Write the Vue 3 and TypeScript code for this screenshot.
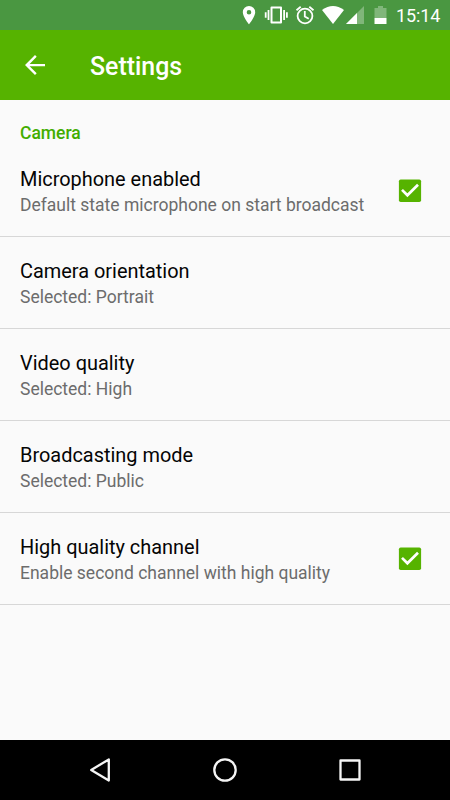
<script setup lang="ts">
interface Setting { title: string; summary: string; checked?: boolean }
const settings: Setting[] = [
  { title: 'Microphone enabled', summary: 'Default state microphone on start broadcast', checked: true },
  { title: 'Camera orientation', summary: 'Selected: Portrait' },
  { title: 'Video quality', summary: 'Selected: High' },
  { title: 'Broadcasting mode', summary: 'Selected: Public' },
  { title: 'High quality channel', summary: 'Enable second channel with high quality', checked: true },
]
</script>

<template>
  <div class="screen">
    <div class="status">
      <svg width="148" height="30" viewBox="240 0 148 30">
        <path fill="#fff" fill-rule="evenodd" d="M249 6a6.200 6.200 0 0 0-6.200 6.200c0 4.600 6.200 12 6.200 12s6.200-7.400 6.200-12A6.200 6.200 0 0 0 249 6zm0 4a2.300 2.300 0 1 1 0 4.600a2.300 2.300 0 0 1 0-4.600z" />
        <path fill="none" stroke="#fff" stroke-width="2" stroke-linejoin="round" d="M271.500 7.500h9.500v15h-9.500z" />
        <path fill="none" stroke="#fff" stroke-width="1.800" d="M268.500 10v10M265.700 12.200v5.600M284.100 10v10M286.900 12.200v5.600" />
        <g fill="none" stroke="#fff" stroke-width="1.800"><circle cx="305" cy="16" r="7.400" /><path d="M304.800 11v5.500l3.900 2.300M296.500 10.300l4.200-3.500M313.500 10.300l-4.200-3.500" /></g>
        <path fill="#fff" d="M322 10q11-8 22 0L333 24z" />
        <path fill="#fff" fill-opacity=".3" d="M364 6v18h-18z" /><path fill="#fff" d="M357 13v11h-11z" />
        <path fill="#fff" fill-opacity=".3" d="M378 6h5v2h3.500v10h-12V8h3.500z" /><path fill="#fff" d="M374.500 18h12v6h-12z" />
      </svg>
      <span class="time">15:14</span>
    </div>
    <header class="bar">
      <svg width="30" height="30" viewBox="0 0 24 24"><path fill="#fff" d="M20 11.100H7.700l5.650-5.650L12 4l-8 8 8 8 1.350-1.400L7.700 12.900H20z" /></svg>
      <h1>Settings</h1>
    </header>
    <main>
      <h2>Camera</h2>
      <section v-for="s in settings" :key="s.title" class="row">
        <div class="copy"><div class="title">{{ s.title }}</div><div class="summary">{{ s.summary }}</div></div>
        <svg v-if="s.checked" class="check" width="30" height="30" viewBox="0 0 30 30"><rect x="3.900" y="3.500" width="22.200" height="22.500" rx="1.800" fill="#56b300" /><path fill="none" stroke="#fff" stroke-width="2.700" d="M7 13.900l5.400 5.400L23 8.800" /></svg>
      </section>
    </main>
    <nav>
      <svg width="450" height="60" viewBox="0 0 450 60" fill="none" stroke="#f5f5f5" stroke-width="2.300"><path stroke-linejoin="round" d="M108.800 19.400v21.200L91.200 30z" /><circle cx="225" cy="30" r="10.700" /><path stroke-linejoin="round" d="M340.500 20.500h19v19h-19z" /></svg>
    </nav>
  </div>
</template>

<style>
body { margin: 0; }
</style>
<style scoped>
.screen { width: 450px; height: 800px; display: flex; flex-direction: column; background: #fafafa; font-family: Roboto, sans-serif; overflow: hidden; }
.status { height: 30px; background: #4a9741; display: flex; padding-left: 240px; color: #fff; }
.time { font-size: 18px; line-height: 32px; margin-left: 8px; letter-spacing: -.1px; }
.bar { height: 70px; background: #56b300; display: flex; align-items: center; padding-left: 20px; gap: 40px; }
h1 { margin: 4px 0 0; color: #fff; font-size: 24.900px; font-weight: 500; line-height: 30px; }
main { flex: 1; }
h2 { margin: 0; padding: 22px 20px 0; height: 23px; font-size: 17.500px; line-height: 22px; font-weight: 500; color: #43ad00; }
.row { height: 91px; border-bottom: 1px solid #d7d7d7; display: flex; align-items: center; justify-content: space-between; padding: 0 25px 0 20px; }
.copy { padding-top: 4px; }
.title { font-size: 19.930px; line-height: 25px; color: #050505; }
.summary { font-size: 17.500px; line-height: 26px; color: #6c6c6c; }
nav { height: 60px; background: #000; }
nav svg { display: block; }
</style>
